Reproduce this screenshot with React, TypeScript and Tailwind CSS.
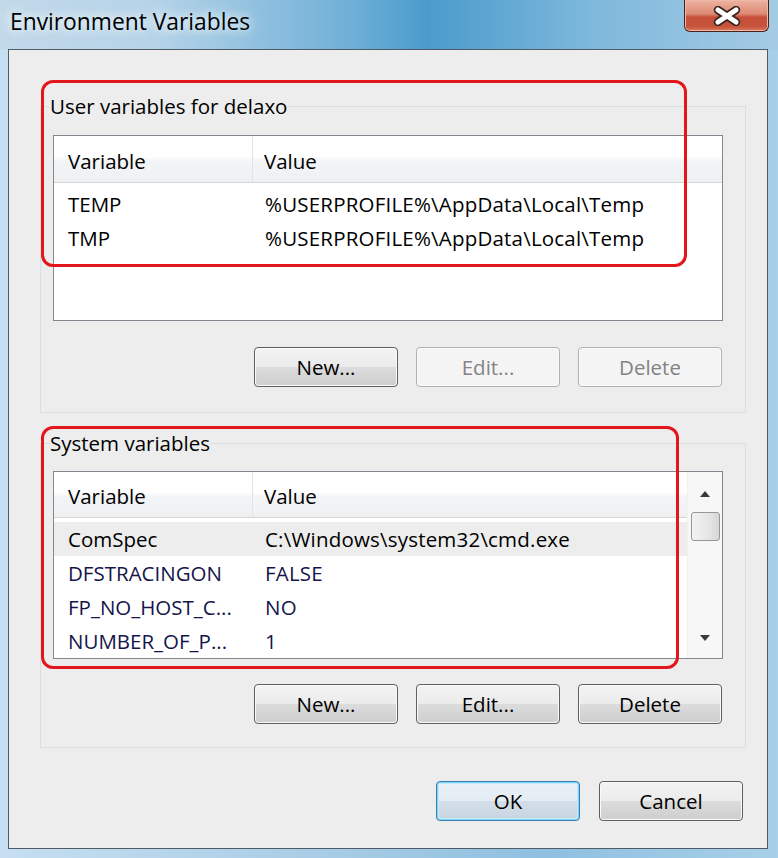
import React from "react";

type Row = { name: string; value: string; hl?: boolean; navy?: boolean };

const userRows: Row[] = [
  { name: "TEMP", value: "%USERPROFILE%\\AppData\\Local\\Temp" },
  { name: "TMP", value: "%USERPROFILE%\\AppData\\Local\\Temp" },
];

const sysRows: Row[] = [
  { name: "ComSpec", value: "C:\\Windows\\system32\\cmd.exe", hl: true },
  { name: "DFSTRACINGON", value: "FALSE", navy: true },
  { name: "FP_NO_HOST_C...", value: "NO", navy: true },
  { name: "NUMBER_OF_P...", value: "1", navy: true },
];

function Btn({ label, disabled, primary }: { label: string; disabled?: boolean; primary?: boolean }) {
  const base =
    "w-[144px] h-[40px] rounded-[4px] border flex items-center justify-center text-[20.5px] leading-none";
  if (disabled)
    return (
      <div className={base + " border-[#adb2b5] bg-[#f4f4f4] text-[#838383] shadow-[inset_0_0_0_1px_#fbfbfb]"}>
        {label}
      </div>
    );
  if (primary)
    return (
      <div
        className={
          base +
          " border-[#3c7fb1] text-black bg-[linear-gradient(to_bottom,#eaf2f8_0%,#e3ecf3_50%,#d3dee8_51%,#c8d5e0_100%)] shadow-[inset_0_0_0_1px_#7fd3f5,inset_0_0_0_2px_#c4ebfb]"
        }
      >
        {label}
      </div>
    );
  return (
    <div
      className={
        base +
        " border-[#5f5f5f] text-black bg-[linear-gradient(to_bottom,#f3f3f3_0%,#ebebeb_50%,#dcdcdc_51%,#cecece_100%)] shadow-[inset_0_0_0_1px_#fafafa]"
      }
    >
      {label}
    </div>
  );
}

function ListView({
  rows,
  height,
  scroll,
  rowsPad,
}: {
  rows: Row[];
  height: string;
  scroll?: boolean;
  rowsPad: string;
}) {
  return (
    <div className={"ml-[12px] w-[670px] border border-[#828790] bg-white flex " + height}>
      <div className="flex-1 flex flex-col min-w-0">
        <div className="h-[47px] flex border-b border-[#d5d5d5] bg-[linear-gradient(to_bottom,#ffffff_0%,#ffffff_45%,#f3f4f6_55%,#eff0f2_100%)]">
          <div className="w-[199px] pl-[14px] pt-[4px] flex items-center border-r border-[#e2e4e8]">Variable</div>
          <div className="pl-[11px] pt-[4px] flex items-center">Value</div>
        </div>
        <div className={"flex flex-col " + rowsPad}>
          {rows.map((r) => (
            <div
              key={r.name}
              className={
                "h-[34px] flex items-center " +
                (r.hl ? "bg-[#ededed] " : "") +
                (r.navy ? "text-[#15154a]" : "text-black")
              }
            >
              <div className="w-[200px] pl-[14px] whitespace-nowrap">{r.name}</div>
              <div className="pl-[11px] whitespace-nowrap tracking-[0.2px]">{r.value}</div>
            </div>
          ))}
        </div>
      </div>
      {scroll && (
        <div className="w-[35px] bg-[#f7f7f7] border-l border-[#f0f0f0] flex flex-col items-center">
          <svg width="12" height="8" viewBox="0 0 12 8" className="mt-[18px]">
            <path d="M1 7 L6 1 L11 7 Z" fill="#3a3a3a" />
          </svg>
          <div className="mt-[14px] w-[29px] h-[29px] rounded-[3px] border border-[#979797] bg-[linear-gradient(to_right,#f2f2f2,#e6e6e6_60%,#d6d6d6)]" />
          <div className="flex-1" />
          <svg width="12" height="8" viewBox="0 0 12 8" className="mb-[16px]">
            <path d="M1 1 L11 1 L6 7 Z" fill="#3a3a3a" />
          </svg>
        </div>
      )}
    </div>
  );
}

export default function App() {
  return (
    <div className="w-[778px] h-[858px] flex flex-col font-['Open_Sans',sans-serif] text-[20.5px] text-black bg-[linear-gradient(to_right,#c6dff1_0%,#a9cde6_40%,#8fc0e0_70%,#a7cfe9_100%)] overflow-hidden">
      <div className="h-[49px] flex items-start bg-[linear-gradient(to_right,#c2d9ea_0%,#b5d3e8_20%,#6fb0d7_45%,#4a9bcb_55%,#7cb7db_75%,#a5cbe4_100%)]">
        <div className="pl-[10px] pt-[5px] text-[22.8px] leading-[34px] [text-shadow:0_0_10px_#ffffff,0_0_14px_#e8f6ff]">
          Environment Variables
        </div>
        <div className="ml-auto mr-[9px] w-[85px] h-[32px] rounded-b-[6px] border border-t-0 border-[#4a2018] bg-[linear-gradient(to_bottom,#edb3a2_0%,#dd8a74_45%,#c7503a_55%,#c6533b_85%,#d97a5e_100%)] shadow-[inset_0_0_0_1px_#f0b8a8] flex items-center justify-center">
          <svg width="28" height="20" viewBox="0 0 28 20">
            <path d="M5 4 L23 16 M23 4 L5 16" stroke="#3b2320" strokeWidth="8.5" strokeLinecap="round" />
            <path d="M5 4 L23 16 M23 4 L5 16" stroke="#ffffff" strokeWidth="5" strokeLinecap="round" />
          </svg>
        </div>
      </div>
      <div className="ml-[8px] mr-[10px] h-[800px] border border-[#4f5b66] bg-[#ededed] relative flex flex-col">
        <fieldset className="mt-[44px] ml-[31px] w-[706px] border border-[#d5dfe5] pb-[25px]">
          <legend className="ml-[8px] px-[1px] leading-[24px]">User variables for delaxo</legend>
          <div className="mt-[17px]">
            <ListView rows={userRows} height="h-[186px]" rowsPad="pt-[4px]" />
          </div>
          <div className="mt-[26px] pr-[23px] flex justify-end gap-[18px]">
            <Btn label="New..." />
            <Btn label="Edit..." disabled />
            <Btn label="Delete" disabled />
          </div>
        </fieldset>
        <fieldset className="mt-[18px] ml-[31px] w-[706px] border border-[#d5dfe5] pb-[23px]">
          <legend className="ml-[8px] px-[1px] leading-[24px]">System variables</legend>
          <div className="mt-[16px]">
            <ListView rows={sysRows} height="h-[188px]" scroll rowsPad="pt-[4px]" />
          </div>
          <div className="mt-[25px] pr-[23px] flex justify-end gap-[18px]">
            <Btn label="New..." />
            <Btn label="Edit..." />
            <Btn label="Delete" />
          </div>
        </fieldset>
        <div className="mt-[33px] pr-[24px] flex justify-end gap-[19px]">
          <Btn label="OK" primary />
          <Btn label="Cancel" />
        </div>
        <div className="absolute left-[32px] top-[30px] w-[646px] h-[187px] border-[3px] border-[#e3161b] rounded-[12px] pointer-events-none" />
        <div className="absolute left-[32px] top-[376px] w-[638px] h-[243px] border-[3px] border-[#e3161b] rounded-[12px] pointer-events-none" />
      </div>
    </div>
  );
}
